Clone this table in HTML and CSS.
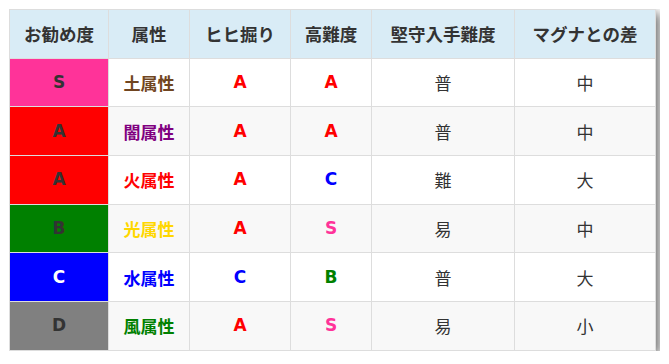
FILE: index.html
```html
<!DOCTYPE html>
<html lang="ja">
<head>
<meta charset="utf-8">
<link rel="stylesheet" href="styles.css">
</head>
<body>
<table class="tbl">
  <colgroup>
    <col class="c1"><col class="c2"><col class="c3"><col class="c4"><col class="c5"><col class="c6">
  </colgroup>
  <thead>
    <tr><th>お勧め度</th><th>属性</th><th>ヒヒ掘り</th><th>高難度</th><th>堅守入手難度</th><th>マグナとの差</th></tr>
  </thead>
  <tbody>
    <tr><td class="rank r-s">S</td><td class="b earth">土属性</td><td class="b lt red">A</td><td class="b lt red">A</td><td>普</td><td>中</td></tr>
    <tr><td class="rank r-a">A</td><td class="b dark">闇属性</td><td class="b lt red">A</td><td class="b lt red">A</td><td>普</td><td>中</td></tr>
    <tr><td class="rank r-a">A</td><td class="b red">火属性</td><td class="b lt red">A</td><td class="b lt blue">C</td><td>難</td><td>大</td></tr>
    <tr><td class="rank r-b">B</td><td class="b gold">光属性</td><td class="b lt red">A</td><td class="b lt pink">S</td><td>易</td><td>中</td></tr>
    <tr><td class="rank r-c">C</td><td class="b blue">水属性</td><td class="b lt blue">C</td><td class="b lt green">B</td><td>普</td><td>大</td></tr>
    <tr><td class="rank r-d">D</td><td class="b green">風属性</td><td class="b lt red">A</td><td class="b lt pink">S</td><td>易</td><td>小</td></tr>
  </tbody>
</table>
</body>
</html>
```
FILE: styles.css
```css
html, body { background: #fff; }
body {
  margin: 9px;
  font-family: "Noto Sans CJK JP", sans-serif;
  color: #333;
}
.tbl {
  border-collapse: collapse;
  table-layout: fixed;
  width: 646px;
  box-shadow: 4px 4px 10px rgba(0,0,0,0.55);
}
.c1 { width: 99px; }
.c2 { width: 81px; }
.c3 { width: 101px; }
.c4 { width: 81px; }
.c5 { width: 143px; }
.c6 { width: 141px; }
th, td {
  border: 1px solid #dddddd;
  text-align: center;
  height: 47.7px;
  padding: 0;
  font-size: 17px;
  line-height: 1;
}
th {
  background: #d9ecf6;
  font-weight: bold;
  color: #333;
  font-size: 17.5px;
}
tbody tr:nth-child(odd) td { background: #fff; }
tbody tr:nth-child(even) td { background: #f8f8f8; }
td.b { font-weight: bold; }
td.lt, td.rank { font-family: "DejaVu Sans", "Noto Sans CJK JP", sans-serif; font-size: 17px; }
td.rank { font-weight: bold; color: #333; }
tbody tr td.r-s { background: #ff3399; }
tbody tr td.r-a { background: #ff0000; }
tbody tr td.r-b { background: #008000; }
tbody tr td.r-c { background: #0000ff; color: #fff; }
tbody tr td.r-d { background: #808080; }
.earth { color: #704520; }
.dark { color: #800080; }
.red { color: #ff0000; }
.blue { color: #0000ff; }
.gold { color: #ffd700; }
.green { color: #008000; }
.pink { color: #ff3399; }
```
